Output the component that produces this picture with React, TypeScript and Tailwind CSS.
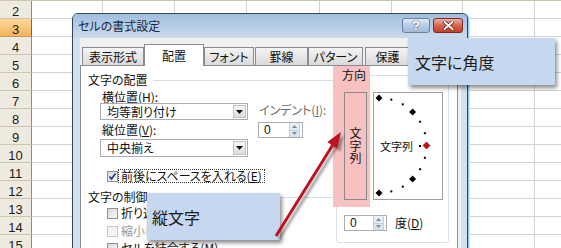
import React from 'react';

const rows = [2, 3, 4, 5, 6, 7, 8, 9, 10, 11, 12, 13, 14, 15];
const colW = ['w-[71px]', 'w-[72px]', 'w-[72px]', 'w-[73px]', 'w-[72px]', 'w-[71px]', 'w-[72px]', 'w-[40px]'];

function Sheet() {
  return (
    <div className="flex flex-col border-t border-[#cbc4b1]">
      {rows.map((n) => (
        <div key={n} className="flex h-[18px] shrink-0">
          <div
            className={`w-[32px] shrink-0 border-b border-r pt-[3px] text-center font-['Liberation_Sans',sans-serif] text-[13px] leading-[15px] text-[#1b1b1b] ${
              n === 3
                ? 'bg-gradient-to-b from-[#fcd99a] to-[#f3b35a] border-b-[#c99a55] border-r-[#7d6a4c]'
                : 'bg-[#eeeadf] border-b-[#cbc4b1] border-r-[#8f8b7e]'
            }`}
          >
            {n}
          </div>
          {colW.map((w, i) => (
            <div key={i} className={`${w} shrink-0 border-b border-r border-[#d2d2d2]`} />
          ))}
        </div>
      ))}
    </div>
  );
}

function DropArrow() {
  return (
    <svg width="7" height="4">
      <polygon points="0,0 7,0 3.5,4" fill="#111" />
    </svg>
  );
}

function Select({ text, h }: { text: string; h: string }) {
  return (
    <div className={`${h} flex items-stretch border border-[#abadb3] bg-white`}>
      <span className="flex flex-1 items-center pl-[6px] text-[12px] leading-[14px]">{text}</span>
      <div className="m-px flex w-[13px] items-center justify-center border border-[#c3c3c3] bg-gradient-to-b from-[#f6f6f6] to-[#dcdcdc]">
        <DropArrow />
      </div>
    </div>
  );
}

function Spin({ w }: { w: string }) {
  return (
    <div className={`${w} flex h-[16px] items-stretch border border-[#abadb3] bg-white`}>
      <span className="flex flex-1 items-center pl-[5px] font-['Liberation_Sans',sans-serif] text-[12px] leading-[14px]">0</span>
      <div className="mr-[2px] flex w-[11px] flex-col border-x border-[#c6d0dc] bg-gradient-to-b from-[#eef3f9] to-[#d6e0ec]">
        <div className="flex flex-1 items-center justify-center border-b border-[#c6d0dc]">
          <svg width="5" height="3">
            <polygon points="0,3 5,3 2.5,0" fill="#7a8aa0" />
          </svg>
        </div>
        <div className="flex flex-1 items-center justify-center">
          <svg width="5" height="3">
            <polygon points="0,0 5,0 2.5,3" fill="#7a8aa0" />
          </svg>
        </div>
      </div>
    </div>
  );
}

function Check({ checked, disabled }: { checked?: boolean; disabled?: boolean }) {
  return (
    <div
      className={`flex h-[11px] w-[11px] shrink-0 items-center justify-center border ${
        disabled ? 'border-[#c9c9c9] bg-[#f4f4f4]' : 'border-[#8f8f8f] bg-gradient-to-br from-[#d9d9d9] to-[#fafafa]'
      }`}
    >
      {checked && (
        <svg width="9" height="9">
          <path d="M1.5 4.5 L3.5 7 L7.5 1.5" stroke="#23467c" strokeWidth="1.8" fill="none" />
        </svg>
      )}
    </div>
  );
}

function GroupHead({ text }: { text: string }) {
  return (
    <div className="flex h-[14px] items-center">
      <span className="text-[12px] leading-[14px]">{text}</span>
      <div className="ml-[5px] h-px flex-1 bg-[#d5dfe5]" />
    </div>
  );
}

function Dial() {
  const marks = [];
  for (let a = 0; a <= 180; a += 15) {
    const r = (a * Math.PI) / 180;
    const x = 5 + 47.5 * Math.sin(r);
    const y = 52.5 - 47.5 * Math.cos(r);
    if (a % 45 === 0) {
      marks.push(
        <polygon
          key={a}
          points={`${x},${y - 3.5} ${x + 3.5},${y} ${x},${y + 3.5} ${x - 3.5},${y}`}
          fill={a === 90 ? '#d01010' : '#000'}
          stroke={a === 90 ? '#6a0000' : 'none'}
          strokeWidth="0.6"
        />
      );
    } else {
      marks.push(<rect key={a} x={x - 1} y={y - 1} width="2" height="2" fill="#000" />);
    }
  }
  return (
    <div className="relative ml-[3px] mt-[16px] h-[108px] w-[70px] border border-[#a0a0a0] bg-white">
      <svg className="absolute left-0 top-0" width="68" height="106">
        {marks}
        <rect x="45" y="52" width="2" height="2" fill="#000" />
      </svg>
      <span className="absolute left-[6px] top-[46px] text-[11px] leading-[14px]">文字列</span>
    </div>
  );
}

function Dialog() {
  const tab = 'flex h-[18px] items-center justify-center border border-b-0 border-[#898c95] bg-gradient-to-b from-[#f4f4f4] to-[#dadada] text-[12px] leading-[14px]';
  return (
    <div className="absolute left-[72px] top-[13px] flex h-[250px] w-[396px] flex-col rounded-t-[6px] border border-[#34465c] bg-[#d3e0ee] shadow-[1px_0_0_#8ccbee,2px_0_0_#cfe9f8]">
      <div className="flex h-[24px] shrink-0 items-start rounded-t-[5px] bg-gradient-to-b from-[#a2bedf] to-[#cbdbed]">
        <div className="pl-[5px] pt-[4px] text-[12px] leading-[16px] text-[#17293f]">セルの書式設定</div>
        <div className="ml-auto mr-[4px] mt-[4px] flex gap-[3px]">
          <div className="flex h-[15px] w-[28px] items-center justify-center rounded-[3px] border border-[#6a809e] bg-gradient-to-b from-[#e2ebf6] via-[#b9cde6] to-[#a3bcdc] font-['Liberation_Sans',sans-serif] text-[12px] font-bold leading-[12px] text-white [text-shadow:0_0_2px_#24344d]">
            ?
          </div>
          <div className="flex h-[15px] w-[30px] items-center justify-center rounded-[3px] border border-[#7b2b20] bg-gradient-to-b from-[#eab3a7] via-[#d5644f] to-[#c0412b]">
            <svg width="11" height="9">
              <path d="M1.5 1 L9.5 8 M9.5 1 L1.5 8" stroke="#5a1a12" strokeWidth="3.4" strokeLinecap="round" />
              <path d="M1.5 1 L9.5 8 M9.5 1 L1.5 8" stroke="#fff" strokeWidth="2" strokeLinecap="round" />
            </svg>
          </div>
        </div>
      </div>
      <div className="ml-[7px] mr-[6px] flex flex-1 flex-col bg-[#f0f0f0]">
        <div className="flex h-[27px] shrink-0 items-end pl-[2px]">
          <div className={`${tab} w-[62px]`}>表示形式</div>
          <div className="relative z-10 -mb-px flex h-[22px] w-[60px] items-center justify-center border border-b-0 border-[#898c95] bg-white text-[12px] leading-[14px]">
            配置
          </div>
          <div className={`${tab} w-[50px]`}>フォント</div>
          <div className={`${tab} ml-px w-[53px]`}>罫線</div>
          <div className={`${tab} w-[55px]`}>パターン</div>
          <div className={`${tab} ml-[2px] w-[45px]`}>保護</div>
        </div>
        <div className="flex w-[378px] flex-1 border border-[#898c95] bg-white">
          <div className="ml-[7px] flex w-[245px] flex-col">
            <div className="mt-[7px]">
              <GroupHead text="文字の配置" />
            </div>
            <div className="flex">
              <div className="ml-[12px] flex w-[148px] flex-col">
                <div className="mt-[3px] h-[13px] pl-[2px] text-[12px] leading-[13px]">
                  横位置(<span className="underline">H</span>):
                </div>
                <Select text="均等割り付け" h="h-[17px]" />
                <div className="mt-[3px] h-[14px] pl-[2px] text-[12px] leading-[14px]">
                  縦位置(<span className="underline">V</span>):
                </div>
                <div className="mt-[2px]">
                  <Select text="中央揃え" h="h-[18px]" />
                </div>
              </div>
              <div className="ml-[10px] flex flex-col">
                <div className="mt-[16px] h-[14px] pl-px text-[12px] leading-[14px] text-[#6d6d6d]">
                  インデント(<span className="underline">I</span>):
                </div>
                <div className="mt-[5px]">
                  <Spin w="w-[45px]" />
                </div>
              </div>
            </div>
            <div className="ml-[19px] mt-[12px] flex h-[14px] items-center">
              <Check checked />
              <span className="border border-dotted border-[#333] px-[2px] text-[12px] leading-[12px]">
                前後にスペースを入れる(<span className="underline">E</span>)
              </span>
            </div>
            <div className="mt-[7px]">
              <GroupHead text="文字の制御" />
            </div>
            <div className="ml-[19px] mt-[2px] flex h-[14px] items-center">
              <Check />
              <span className="ml-[3px] whitespace-nowrap text-[12px] leading-[14px]">
                折り返して全体を表示する(<span className="underline">W</span>)
              </span>
            </div>
            <div className="ml-[19px] mt-[4px] flex h-[14px] items-center">
              <Check disabled />
              <span className="ml-[3px] whitespace-nowrap text-[12px] leading-[14px] text-[#9a9a9a]">
                縮小して全体を表示する(<span className="underline">K</span>)
              </span>
            </div>
            <div className="ml-[19px] mt-[3px] flex h-[14px] items-center">
              <Check />
              <span className="ml-[3px] whitespace-nowrap text-[12px] leading-[14px]">
                セルを結合する(<span className="underline">M</span>)
              </span>
            </div>
          </div>
          <div className="ml-[3px] mt-[9px] flex h-[168px] w-[113px] flex-col rounded-[3px] border border-[#d5dfe5]">
            <div className="flex h-[131px]">
              <div className="-ml-[4px] -mt-[10px] flex h-[141px] w-[37px] shrink-0 flex-col bg-[#f8c1c1]">
                <div className="ml-[9px] mt-[2px] text-[12px] leading-[14px]">方向</div>
                <div className="ml-[11px] mt-[10px] flex h-[108px] w-[23px] flex-col items-center justify-center border border-[#8a8a8a] text-[12px] leading-[12.5px]">
                  <span>文</span>
                  <span>字</span>
                  <span>列</span>
                </div>
              </div>
              <Dial />
            </div>
            <div className="ml-[7px] mt-[8px] flex items-center">
              <Spin w="w-[43px]" />
              <span className="ml-[8px] text-[12px] leading-[14px]">
                度(<span className="underline">D</span>)
              </span>
            </div>
          </div>
        </div>
      </div>
    </div>
  );
}

function Arrow() {
  const line = { x1: 276, y1: 236, x2: 334, y2: 143 };
  const head = '341,132 337.3,148.7 327.3,142.1';
  return (
    <svg className="pointer-events-none absolute left-0 top-0" width="561" height="248">
      <defs>
        <filter id="sh" x="-20%" y="-20%" width="140%" height="140%">
          <feGaussianBlur stdDeviation="1.3" />
        </filter>
      </defs>
      <g transform="translate(3,3)" opacity="0.45" filter="url(#sh)">
        <line {...line} stroke="#333" strokeWidth="3" />
        <polygon points={head} fill="#333" />
      </g>
      <line {...line} stroke="#bd1220" strokeWidth="3" />
      <polygon points={head} fill="#bd1220" />
    </svg>
  );
}

export default function App() {
  return (
    <div className="relative h-[248px] w-[561px] overflow-hidden bg-white font-['Noto_Sans_CJK_JP','Noto_Sans',sans-serif] text-[#111] [font-feature-settings:'palt']">
      <Sheet />
      <Dialog />
      <div className="absolute left-[408px] top-[38px] flex h-[47px] w-[147px] items-center bg-[#c6d8ef] pl-[7px] text-[16px] leading-[20px] text-[#1a1a1a] shadow-[2px_3px_4px_rgba(0,0,0,0.45)]">
        文字に角度
      </div>
      <div className="absolute left-[147px] top-[193px] flex h-[47px] w-[133px] items-center bg-[#c6d8ef] pl-[5px] text-[16px] leading-[20px] text-[#1a1a1a] shadow-[2px_3px_4px_rgba(0,0,0,0.45)]">
        縦文字
      </div>
      <Arrow />
    </div>
  );
}
